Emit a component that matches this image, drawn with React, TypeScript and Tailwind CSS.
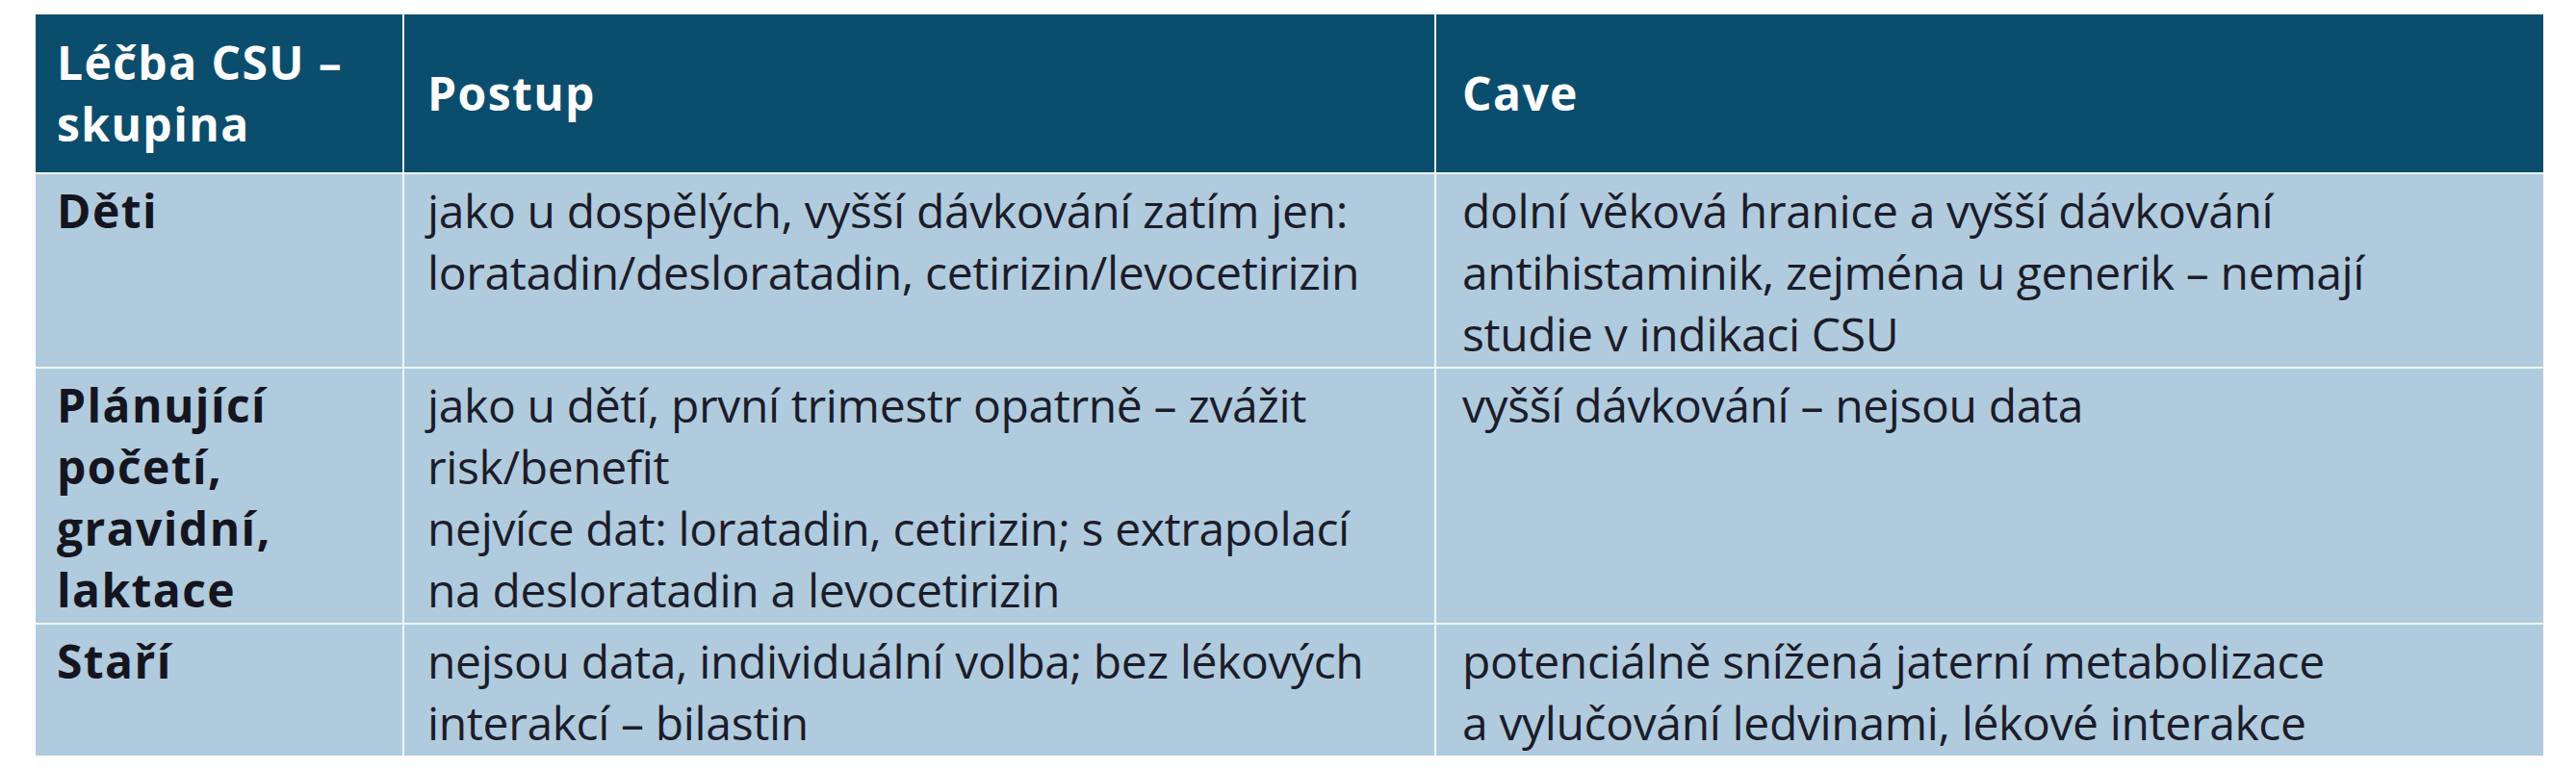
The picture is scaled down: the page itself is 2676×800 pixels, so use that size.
import React from 'react';

const font = { fontFamily: '"Open Sans", "Noto Sans", sans-serif' };

type Row = {
    group: string[];
    postup: string[];
    cave: string[];
};

const rows: Row[] = [
    {
        group: ['Děti'],
        postup: [
            'jako u dospělých, vyšší dávkování zatím jen:',
            'loratadin/desloratadin, cetirizin/levocetirizin',
        ],
        cave: [
            'dolní věková hranice a vyšší dávkování',
            'antihistaminik, zejména u generik – nemají',
            'studie v indikaci CSU',
        ],
    },
    {
        group: ['Plánující', 'početí,', 'gravidní,', 'laktace'],
        postup: [
            'jako u dětí, první trimestr opatrně – zvážit',
            'risk/benefit',
            'nejvíce dat: loratadin, cetirizin; s extrapolací',
            'na desloratadin a levocetirizin',
        ],
        cave: ['vyšší dávkování – nejsou data'],
    },
    {
        group: ['Staří'],
        postup: [
            'nejsou data, individuální volba; bez lékových',
            'interakcí – bilastin',
        ],
        cave: [
            'potenciálně snížená jaterní metabolizace',
            'a vylučování ledvinami, lékové interakce',
        ],
    },
];

// jeden řádek textu = jeden <div>, zalomení přesně podle předlohy
const Lines = ({ lines }: { lines: string[] }) => (
    <>
        {lines.map((l, i) => (
            <div key={i} className="whitespace-nowrap">{l}</div>
        ))}
    </>
);

export default function App() {
    return (
        <div className="min-h-screen bg-white pl-[37px] pt-[15px]" style={font}>
            <div className="grid w-[2605px] grid-cols-[381px_1070px_1150px] grid-rows-[164px_200px_264px_136px] gap-[2px] bg-[#eef8f8] text-[48px] leading-[64px] tracking-[-0.36px]">
                {/* hlavička */}
                <div className="bg-[#0b4d6d] px-[22px] py-[18px] font-bold tracking-[1.4px] text-white">
                    <Lines lines={['Léčba CSU –', 'skupina']} />
                </div>
                <div className="flex items-center bg-[#0b4d6d] px-[24px] font-bold tracking-[1.4px] text-white">Postup</div>
                <div className="flex items-center bg-[#0b4d6d] px-[27px] font-bold tracking-[1.4px] text-white">Cave</div>

                {rows.map((r, i) => (
                    <React.Fragment key={i}>
                        <div className="bg-[#b0cbdd] px-[22px] pt-[6px] font-bold tracking-[1.4px] text-[#15151f]">
                            <Lines lines={r.group} />
                        </div>
                        <div className="bg-[#b0cbdd] px-[24px] pt-[6px] text-[#1c1c2a]">
                            <Lines lines={r.postup} />
                        </div>
                        <div className="bg-[#b0cbdd] px-[27px] pt-[6px] text-[#1c1c2a]">
                            <Lines lines={r.cave} />
                        </div>
                    </React.Fragment>
                ))}
            </div>
        </div>
    );
}
